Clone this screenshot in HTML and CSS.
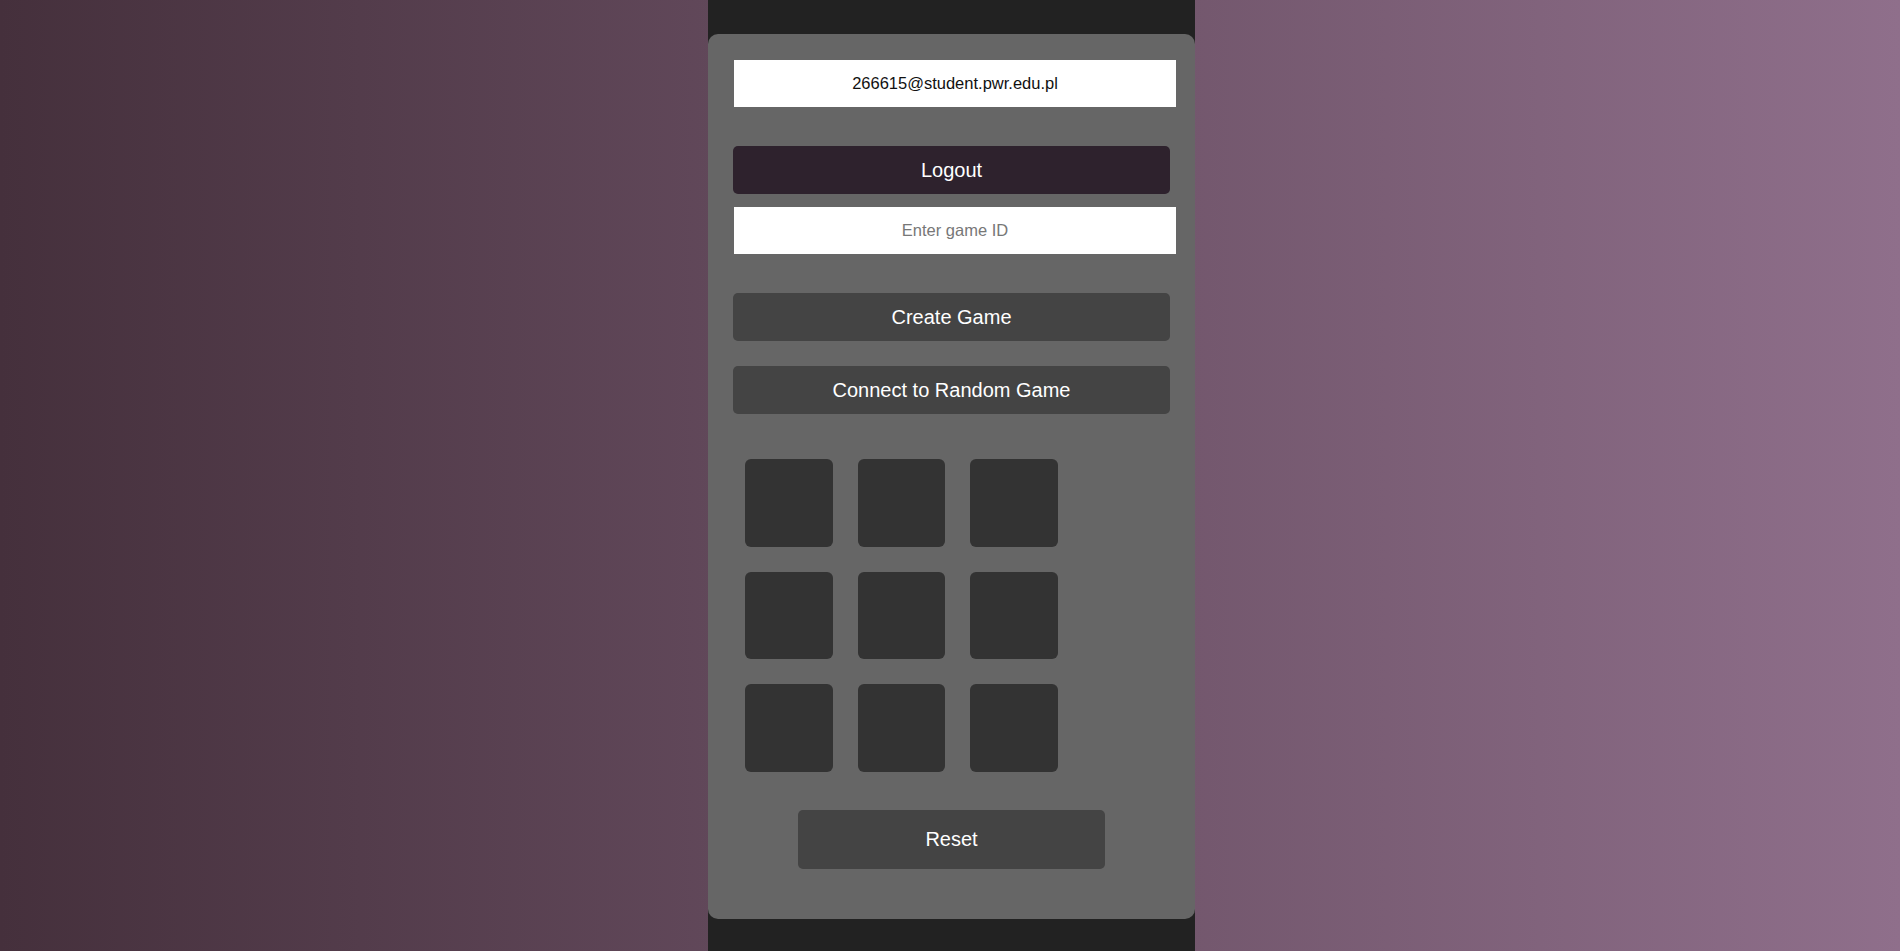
FILE: index.html
```html
<!DOCTYPE html>
<html lang="en">
<head>
<meta charset="utf-8">
<title>Tic Tac Toe</title>
<link rel="stylesheet" href="styles.css">
</head>
<body>
<div class="page">
  <div class="spacer"></div>
  <main class="column">
    <section class="card">
      <input class="field field-email" type="text" value="266615@student.pwr.edu.pl" readonly>
      <button class="btn btn-logout">Logout</button>
      <input class="field field-game" type="text" placeholder="Enter game ID">
      <button class="btn btn-create">Create Game</button>
      <button class="btn btn-connect">Connect to Random Game</button>
      <div class="board">
        <div class="cell"></div><div class="cell"></div><div class="cell"></div>
        <div class="cell"></div><div class="cell"></div><div class="cell"></div>
        <div class="cell"></div><div class="cell"></div><div class="cell"></div>
      </div>
      <button class="btn btn-reset">Reset</button>
    </section>
  </main>
  <div class="spacer"></div>
</div>
</body>
</html>
```
FILE: styles.css
```css
html, body {
  margin: 0;
  padding: 0;
  height: 100%;
}
body {
  background: linear-gradient(to right, #45303c, #8f6f8b);
  font-family: "Liberation Sans", Arial, sans-serif;
  overflow: hidden;
}
.page {
  display: grid;
  grid-template-columns: 708px 487px 1fr;
  min-height: 951px;
}
.column {
  background: #222222;
  padding-top: 34px;
  box-sizing: border-box;
}
.card {
  background: #666666;
  border-radius: 10px;
  padding: 25px;
  height: 885px;
  box-sizing: border-box;
  display: flex;
  flex-direction: column;
  align-items: stretch;
}
.field {
  box-sizing: border-box;
  width: 444px;
  height: 49px;
  border: 1px solid #666666;
  background: #ffffff;
  text-align: center;
  font-family: "Liberation Sans", Arial, sans-serif;
  font-size: 16.5px;
  color: #111111;
  padding: 0;
  margin: 0;
  outline: none;
  border-radius: 0;
}
.field::placeholder {
  color: #777777;
}
.btn {
  box-sizing: border-box;
  height: 48px;
  border: none;
  border-radius: 5px;
  background: #444444;
  color: #ffffff;
  font-family: "Liberation Sans", Arial, sans-serif;
  font-size: 20px;
  padding: 0;
  margin: 0;
  cursor: pointer;
}
.btn-logout {
  background: #2e222d;
  margin-top: 38px;
}
.field-game {
  margin-top: 12px;
}
.btn-create {
  margin-top: 38px;
}
.btn-connect {
  margin-top: 25px;
}
.board {
  display: grid;
  grid-template-columns: repeat(3, 87.5px);
  grid-auto-rows: 87.5px;
  gap: 25px;
  padding-left: 12px;
  margin-top: 45px;
}
.cell {
  background: #333333;
  border-radius: 6px;
}
.btn-reset {
  align-self: center;
  width: 307px;
  height: 59px;
  margin-top: 38px;
}
```
